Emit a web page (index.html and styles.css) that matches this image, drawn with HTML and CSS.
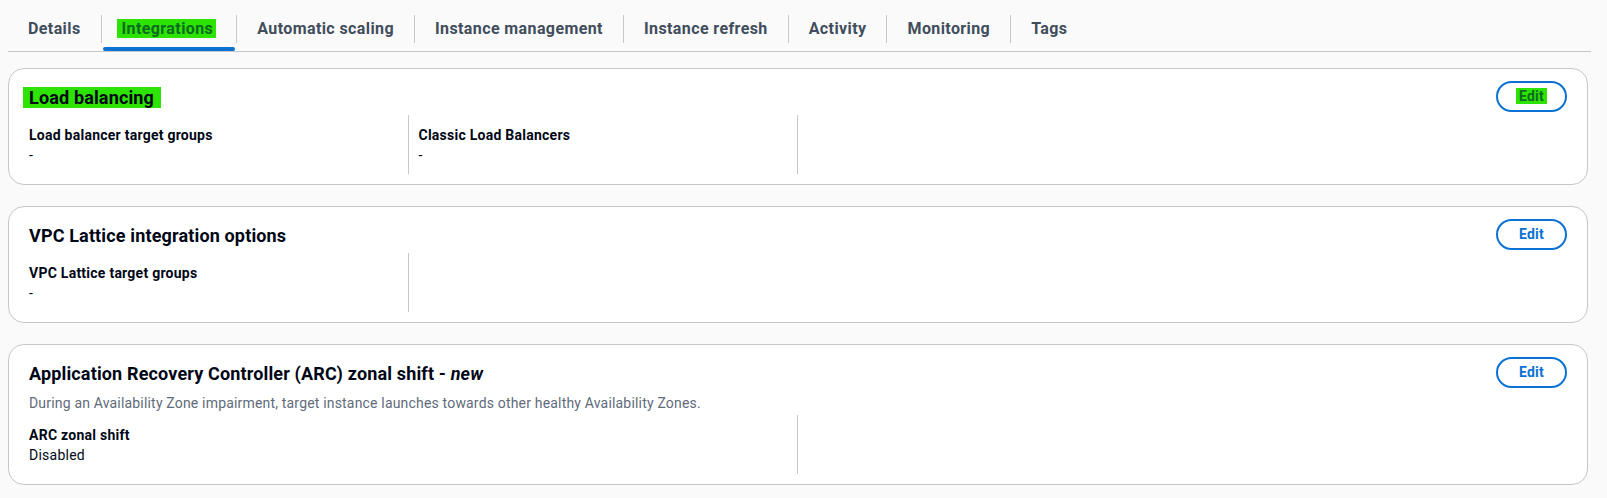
FILE: index.html
```html
<!DOCTYPE html>
<html lang="en">
<head>
    <meta charset="UTF-8">
    <meta name="viewport" content="width=device-width, initial-scale=1.0">
    <title>Auto Scaling group - Integrations</title>
    <link rel="stylesheet" href="styles.css">
</head>
<body>
    <div class="tabs">
        <div class="tab"><span class="tab-label">Details</span><span class="tab-line"></span></div>
        <div class="tab active"><span class="tab-label"><span class="mark">Integrations</span></span><span class="tab-line"></span></div>
        <div class="tab"><span class="tab-label">Automatic scaling</span><span class="tab-line"></span></div>
        <div class="tab"><span class="tab-label">Instance management</span><span class="tab-line"></span></div>
        <div class="tab"><span class="tab-label">Instance refresh</span><span class="tab-line"></span></div>
        <div class="tab"><span class="tab-label">Activity</span><span class="tab-line"></span></div>
        <div class="tab"><span class="tab-label">Monitoring</span><span class="tab-line"></span></div>
        <div class="tab"><span class="tab-label">Tags</span><span class="tab-line"></span></div>
    </div>

    <div class="cards">
        <!-- Load balancing -->
        <section class="card">
            <div class="card-head">
                <div class="card-head-text">
                    <div class="card-title-row">
                        <h2 class="card-title"><span class="mark mark-title">Load balancing</span></h2>
                    </div>
                </div>
                <button class="edit-btn"><span class="mark mark-btn">Edit</span></button>
            </div>
            <div class="kv-grid">
                <div class="kv">
                    <div class="kv-label">Load balancer target groups</div>
                    <div class="kv-value">-</div>
                </div>
                <div class="kv split">
                    <div class="kv-label">Classic Load Balancers</div>
                    <div class="kv-value">-</div>
                </div>
                <div class="kv split"></div>
            </div>
        </section>

        <!-- VPC Lattice -->
        <section class="card">
            <div class="card-head">
                <div class="card-head-text">
                    <div class="card-title-row">
                        <h2 class="card-title">VPC Lattice integration options</h2>
                    </div>
                </div>
                <button class="edit-btn">Edit</button>
            </div>
            <div class="kv-grid">
                <div class="kv">
                    <div class="kv-label">VPC Lattice target groups</div>
                    <div class="kv-value">-</div>
                </div>
                <div class="kv split"></div>
            </div>
        </section>

        <!-- ARC zonal shift -->
        <section class="card">
            <div class="card-head">
                <div class="card-head-text">
                    <div class="card-title-row">
                        <h2 class="card-title">Application Recovery Controller (ARC) zonal shift - <em>new</em></h2>
                    </div>
                    <p class="card-desc">During an Availability Zone impairment, target instance launches towards other healthy Availability Zones.</p>
                </div>
                <button class="edit-btn">Edit</button>
            </div>
            <div class="kv-grid">
                <div class="kv wide">
                    <div class="kv-label">ARC zonal shift</div>
                    <div class="kv-value">Disabled</div>
                </div>
                <div class="kv split"></div>
            </div>
        </section>
    </div>
</body>
</html>
```

FILE: styles.css
```css
body, html {
    margin: 0;
    padding: 0;
}

body {
    background-color: #fafafa;
    font-family: Roboto, "Liberation Sans", sans-serif;
    letter-spacing: 0.25px;
    color: #000716;
}

/* tab bar */
.tabs {
    display: flex;
    margin: 0 16px 0 8px;
    border-bottom: 1px solid #c6c6cd;
}

.tab {
    display: flex;
    flex-direction: column;
    padding-top: 15px;
}

.tab-label {
    display: block;
    padding: 4px 20px;
    font-size: 16px;
    line-height: 20px;
    font-weight: 700;
    letter-spacing: 0.4px;
    color: #414d5c;
    border-left: 1px solid #c6c6cd;
    white-space: nowrap;
}

.tab:first-child .tab-label {
    border-left: none;
}

.tab-line {
    display: block;
    height: 4px;
    margin: 4px 1px 0 2px;
    border-radius: 2px;
}

.tab.active .tab-line {
    background-color: #0972d3;
}

/* green highlight marks */
.mark {
    background-color: #2ce304;
    color: #0b6b1e;
}

.tab .mark {
    padding: 0 3px 0 5px;
    margin-left: -5px;
}

.mark-title {
    color: #000716;
    padding: 0 7px 0 6px;
    margin-left: -6px;
}

.mark-btn {
    padding: 0 3px;
    margin: 0 -3px;
}

/* cards */
.cards {
    display: flex;
    flex-direction: column;
    gap: 21px;
    margin: 16px 19px 0 8px;
}

.card {
    background-color: #fff;
    border: 1px solid #c6c6cd;
    border-radius: 16px;
    padding: 12px 20px 10px 20px;
}

.card-head {
    display: flex;
    justify-content: space-between;
    align-items: flex-start;
}

.card-title-row {
    display: flex;
    align-items: center;
    height: 31px;
    padding-top: 2px;
    box-sizing: border-box;
}

.card-title {
    margin: 0;
    font-size: 18px;
    line-height: 22px;
    font-weight: 700;
    letter-spacing: 0.15px;
}

.card-title em {
    font-style: italic;
}

.card-desc {
    margin: 6px 0 0 0;
    font-size: 14px;
    line-height: 18px;
    letter-spacing: 0.18px;
    color: #5f6b7a;
}

.edit-btn {
    background: #fff;
    border: 2px solid #0972d3;
    border-radius: 20px;
    color: #0972d3;
    font-family: inherit;
    font-size: 14px;
    line-height: 19px;
    font-weight: 700;
    letter-spacing: 0.25px;
    padding: 4px 21px;
    cursor: pointer;
}

/* key value columns */
.kv-grid {
    display: grid;
    grid-template-columns: repeat(4, 1fr);
    column-gap: 20px;
    margin-top: 3px;
}

.kv {
    padding: 10px 0 9px 0;
    min-height: 40px;
}

.kv.wide {
    grid-column: span 2;
}

.kv.split {
    border-left: 1px solid #c6c6cd;
    margin-left: -11px;
    padding-left: 10px;
}

.kv-label {
    font-size: 14px;
    line-height: 20px;
    font-weight: 700;
}

.kv-value {
    font-size: 14px;
    line-height: 20px;
}
```
